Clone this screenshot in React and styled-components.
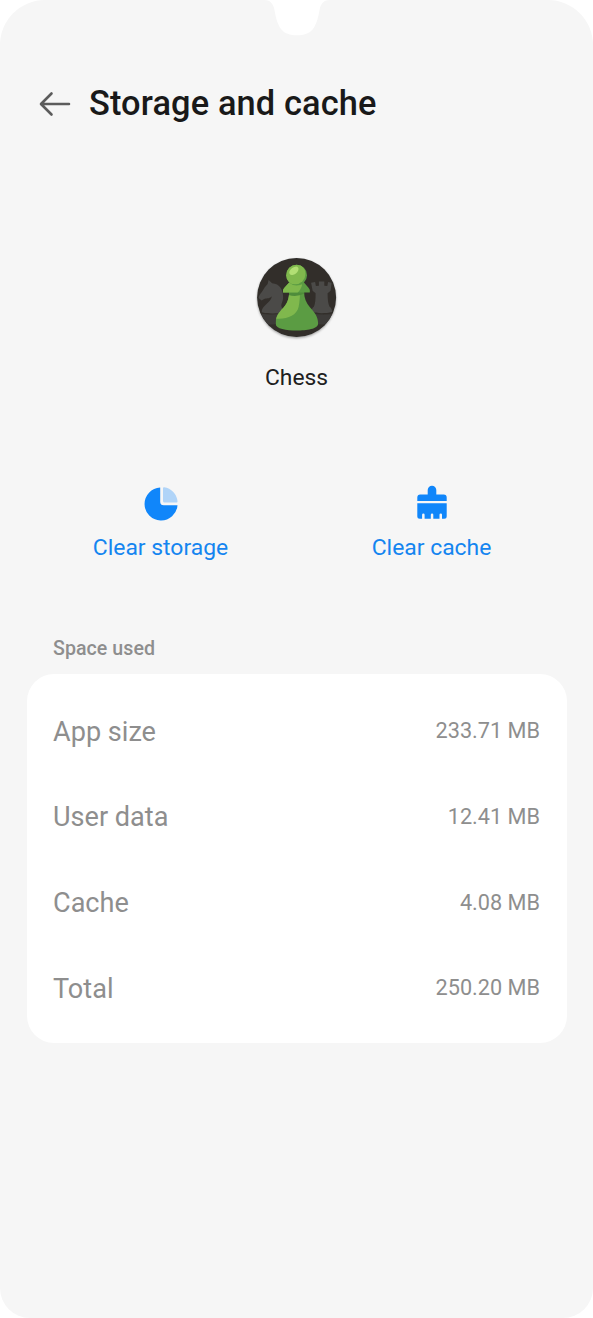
import React from "react";
import styled, { createGlobalStyle } from "styled-components";

const GlobalStyle = createGlobalStyle`
  * {
    box-sizing: border-box;
  }
  body {
    margin: 0;
    background: #fff;
    font-family: Roboto, "Liberation Sans", sans-serif;
  }
  h1, h2, p {
    margin: 0;
  }
`;

const Screen = styled.main`
  position: relative;
  width: 100%;
  height: 1318px;
  padding: 75px 26.5px 0;
  background: #f6f6f6;
  border-radius: 45px 45px 30px 30px;
  overflow: hidden;
`;
const Notch = styled.svg`
  position: absolute;
  top: 0;
  left: 50%;
  margin-left: -32.5px;
  width: 66px;
  height: 36px;
`;
const Header = styled.header`
  display: flex;
  align-items: center;
  height: 57px;
  padding-left: 12.5px;

  svg {
    width: 32px;
    height: 26px;
    margin-right: 18px;
  }
`;
const Title = styled.h1`
  padding-bottom: 1px;
  font-size: 34.4px;
  font-weight: 500;
  line-height: 56px;
  letter-spacing: 0.12px;
  color: #191919;
  white-space: nowrap;
`;
const AppInfo = styled.section`
  display: flex;
  flex-direction: column;
  align-items: center;
  margin-top: 122px;
  height: 225px;

  svg {
    width: 88px;
    height: 88px;
  }
`;
const AppName = styled.p`
  margin-top: 20px;
  font-size: 22.8px;
  line-height: 32px;
  color: #202020;
`;
const Actions = styled.div`
  display: grid;
  grid-template-columns: 268px 274px;
  height: 156px;
`;
const Action = styled.button`
  display: flex;
  flex-direction: column;
  align-items: center;
  justify-content: flex-start;
  padding: 0;
  border: none;
  background: transparent;
  font-family: inherit;
  font-size: 22.9px;
  line-height: 32px;
  color: #1485f0;
  cursor: pointer;

  svg {
    width: 40px;
    height: 40px;
    margin: 4px 0 9px;
  }
`;
const SectionLabel = styled.h2`
  padding-left: 26.5px;
  font-size: 19.6px;
  font-weight: 500;
  line-height: 28px;
  letter-spacing: 0.05px;
  color: #8e8e8e;
`;
const Card = styled.ul`
  margin: 11px 0 0;
  padding: 14.5px 26.5px 12px;
  height: 369px;
  list-style: none;
  background: #fff;
  border-radius: 27px;
`;
const Row = styled.li`
  display: flex;
  align-items: center;
  justify-content: space-between;
  height: 85.65px;
  color: #8e8e8e;
`;
const RowName = styled.span`
  padding-top: 1px;
  font-size: 27.1px;
`;
const RowValue = styled.span`
  padding-bottom: 1px;
  font-size: 21.7px;
`;

const BackIcon = () => (
  <svg viewBox="0 0 32 26" fill="none" stroke="#5c5c5c" strokeWidth="2.6" strokeLinecap="round" strokeLinejoin="round">
    <path d="M30 13H2.5M12.5 2.5L2 13l10.5 10.5" />
  </svg>
);

const ChessIcon = () => (
  <svg viewBox="0.4 0 88 88">
    <defs>
      <clipPath id="disc">
        <circle cx="44" cy="43.5" r="39.5" />
      </clipPath>
      <clipPath id="pawnHead">
        <circle cx="44" cy="21.2" r="10.4" />
      </clipPath>
      <clipPath id="pawnBody">
        <path d="M36.5 38C36.5 44 35 49 31 53.5C26 58.5 23 62.5 23 69.5C23 75 34 76.5 44 76.5S65.5 75 65.5 69.5C65.5 62.5 62 58.5 57.5 53.5C53.5 49 51.5 44 51.5 38z" />
      </clipPath>
      <filter id="shadow" x="-10%" y="-10%" width="120%" height="120%">
        <feDropShadow dx="0" dy="1.2" stdDeviation="1" floodColor="#000" floodOpacity="0.35" />
      </filter>
    </defs>
    <circle cx="44" cy="43.5" r="39.5" fill="#302e2b" filter="url(#shadow)" />
    <g clipPath="url(#disc)">
      {/* plinths */}
      <path d="M4 59q13 3 26 0v10q-13 3-22 0zM58 59q13 3 26 0l-4 10q-10 3-22 0z" fill="#3d3b39" />
      {/* knight */}
      <path d="M16 26l3.5 3.2C27 29.5 31 36 30.5 44c-.3 4-2.5 6.500-1.500 9 .6 1.700 2.200 3 2 5.200-5 1.600-17 1.600-22 0 0-7.200 9-8.700 10.300-16-3 3-6 1.600-7.800 2.800L9 46.500l-3-2.500c0-3 4-6 6-10.500l3-3.500z" fill="#4b4a48" />
      {/* rook */}
      <path d="M58.5 28.8l4-.8.8 4 3-.2V27.500h5.400v4.300l3 .2.800-4 3.500.8-1 8-3 2.500c0 6 .5 10.500 2 13.500 1.500 1 2.500 2.500 2.500 5.200-6 1.600-15 1.600-20.500 0 0-2.700.8-4.200 2.300-5.200 1.400-3 1.700-7.500 1.700-13.500l-3-2.500z" fill="#4b4a48" />
      {/* pawn */}
      <g clipPath="url(#pawnBody)">
        <path d="M22 36h45v42H22z" fill="#5b9c43" />
        <path d="M22 36h26c-1 5-.5 10-2 17-2 9-13 13-24 11.500z" fill="#80b84d" />
        <path d="M36 38h16v1.500q-8 4-16 1.500z" fill="#4f8c3b" />
      </g>
      <path d="M37.5 27.5L32 33.5c-1.500 1.500-1.800 3-1.500 5h26.700c.3-2 0-3.500-1.500-5l-5.200-6z" fill="#5b9c43" />
      <path d="M37.5 27.5L32 33.5c-1.500 1.500-1.800 3-1.500 5h14.500c2-1 4-5 4.500-8z" fill="#80b84d" />
      <g clipPath="url(#pawnHead)">
        <path d="M33 10h22v23H33z" fill="#5b9c43" />
        <circle cx="42.5" cy="19.8" r="10.4" fill="#80b84d" />
      </g>
      <ellipse cx="41.3" cy="16.8" rx="5.3" ry="3.3" transform="rotate(-38 41.3 16.8)" fill="#b2df74" />
    </g>
  </svg>
);

const PieIcon = () => (
  <svg viewBox="0 0 40 40">
    <path d="M19.2 4.5a16.5 16.5 0 1 0 17.3 17.7H22.7a3.5 3.5 0 0 1-3.5-3.5z" fill="#1086fa" />
    <path d="M22 5.2a1 1 0 0 1 1.1-1A15.5 15.5 0 0 1 36.5 18.3a1 1 0 0 1-1 1.200H23.500a1.500 1.500 0 0 1-1.500-1.500z" fill="#b0d4f8" />
  </svg>
);

const BrushIcon = () => (
  <svg viewBox="0 0 40 40" fill="#1086fa">
    <path d="M15.7 11.5V7a4.3 4.3 0 0 1 8.6 0v4.5h7.4a3 3 0 0 1 3 3v3.5H5.3v-3.5a3 3 0 0 1 3-3z" />
    <path d="M5.3 20.3h29.4v13a2.5 2.5 0 0 1-2.5 2.5h-2.2v-4a1.25 1.25 0 0 0-2.5 0v4h-6.2v-4a1.25 1.25 0 0 0-2.5 0v4h-6.2v-4a1.25 1.25 0 0 0-2.5 0v4H7.8a2.5 2.5 0 0 1-2.5-2.5z" />
  </svg>
);

const rows = [
  { name: "App size", value: "233.71 MB" },
  { name: "User data", value: "12.41 MB" },
  { name: "Cache", value: "4.08 MB" },
  { name: "Total", value: "250.20 MB" },
];

const App = () => {
  return (
    <>
      <GlobalStyle />
      <Screen>
        <Notch viewBox="0 0 66 36">
          <path d="M0 0C6 0 9 3 10.5 10C12 19 14 25 17 29C20.5 33.5 26 35.3 33 35.3S45.5 33.5 49 29C52 25 54 19 55.5 10C57 3 60 0 66 0Z" fill="#fff" />
        </Notch>
        <Header>
          <BackIcon />
          <Title>Storage and cache</Title>
        </Header>
        <AppInfo>
          <ChessIcon />
          <AppName>Chess</AppName>
        </AppInfo>
        <Actions>
          <Action>
            <PieIcon />
            Clear storage
          </Action>
          <Action>
            <BrushIcon />
            Clear cache
          </Action>
        </Actions>
        <SectionLabel>Space used</SectionLabel>
        <Card>
          {rows.map((row) => (
            <Row key={row.name}>
              <RowName>{row.name}</RowName>
              <RowValue>{row.value}</RowValue>
            </Row>
          ))}
        </Card>
      </Screen>
    </>
  );
};

export default App;
